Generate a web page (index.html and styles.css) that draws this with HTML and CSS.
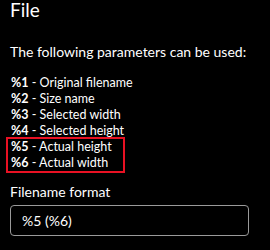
FILE: index.html
```html
<!DOCTYPE html>
<html lang="en">
<head>
    <meta charset="UTF-8">
    <meta name="viewport" content="width=device-width, initial-scale=1.0">
    <title>File naming</title>
    <link rel="stylesheet" href="styles.css">
</head>
<body>

    <!-- File section -->
    <div class="section">
        <h2 class="section-title">File</h2>
        <p class="intro">The following parameters can be used:</p>

        <div class="params">
            <div class="param"><b>%1</b> - Original filename</div>
            <div class="param"><b>%2</b> - Size name</div>
            <div class="param"><b>%3</b> - Selected width</div>
            <div class="param"><b>%4</b> - Selected height</div>
            <div class="highlight">
                <div class="param"><b>%5</b> - Actual height</div>
                <div class="param"><b>%6</b> - Actual width</div>
            </div>
        </div>

        <label class="field-label" for="fileFormat">Filename format</label>
        <input class="field" type="text" id="fileFormat" value="%5 (%6)">
    </div>

</body>
</html>
```

FILE: styles.css
```css
body {
    font-family: Lato, "Noto Sans", sans-serif;
    background-color: #000;
    color: #fff;
    margin: 0;
    padding: 0 10px;
}

/* Section */
.section-title {
    font-size: 19px;
    font-weight: 400;
    line-height: 20px;
    margin: 0;
}

.intro {
    font-size: 14px;
    line-height: 20px;
    white-space: nowrap;
    margin: 22px 0 0;
}

/* Parameter list */
.params {
    margin-top: 13px;
    font-size: 12.5px;
    line-height: 16px;
    white-space: nowrap;
}

.param {
    padding-left: 1px;
}

.param b {
    font-weight: 700;
}

.highlight {
    width: 113px;
    margin: -2px 0 -2px -4px;
    padding-left: 2px;
    border: 2px solid #e81123;
}

/* Text field */
.field-label {
    display: block;
    font-size: 14px;
    line-height: 20px;
    margin-top: 11px;
}

.field {
    display: block;
    box-sizing: border-box;
    width: 239px;
    height: 31px;
    margin-top: 3px;
    padding: 0 11px;
    font-family: inherit;
    font-size: 14px;
    color: #fff;
    background-color: #000;
    border: 1px solid #9a9a9a;
    border-radius: 4px;
    outline: none;
}
```
